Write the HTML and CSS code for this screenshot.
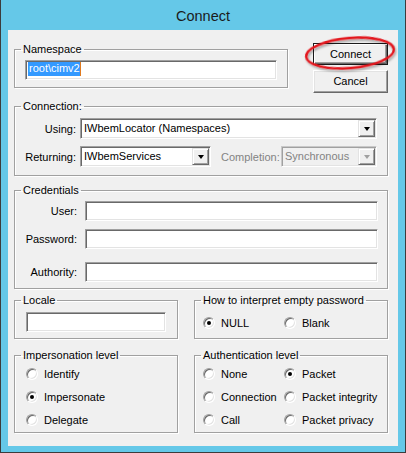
FILE: index.html
```html
<!DOCTYPE html>
<html>
<head>
<meta charset="utf-8">
<link rel="stylesheet" href="styles.css">
</head>
<body>
<div class="window">
  <div class="titlebar">Connect</div>
  <div class="client">
    <div class="row-top">
      <fieldset class="group ns">
        <legend>Namespace</legend>
        <div class="inner ns-inner">
          <div class="textbox ns-box"><span class="sel">root\cimv2</span><span class="caret"></span></div>
        </div>
      </fieldset>
      <div class="buttons">
        <div class="btn default">Connect</div>
        <div class="btn cancel">Cancel</div>
      </div>
    </div>

    <fieldset class="group conn">
      <legend>Connection:</legend>
      <div class="inner conn-inner">
        <div class="frow">
          <span class="lbl lbl-conn">Using:</span>
          <div class="combo combo-using"><span class="ctext">IWbemLocator (Namespaces)</span><span class="arrow"><i></i></span></div>
        </div>
        <div class="frow frow2">
          <span class="lbl lbl-conn">Returning:</span>
          <div class="combo combo-ret"><span class="ctext">IWbemServices</span><span class="arrow"><i></i></span></div>
          <span class="lbl-dis">Completion:</span>
          <div class="combo combo-dis"><span class="ctext">Synchronous</span><span class="arrow"><i></i></span></div>
        </div>
      </div>
    </fieldset>

    <fieldset class="group cred">
      <legend>Credentials</legend>
      <div class="inner cred-inner">
        <div class="frow crow">
          <span class="lbl lbl-cred">User:</span>
          <div class="textbox cred-box"></div>
        </div>
        <div class="frow crow crow2">
          <span class="lbl lbl-cred">Password:</span>
          <div class="textbox cred-box"></div>
        </div>
        <div class="frow crow crow3">
          <span class="lbl lbl-cred">Authority:</span>
          <div class="textbox cred-box"></div>
        </div>
      </div>
    </fieldset>

    <div class="pair pair1">
      <fieldset class="group left">
        <legend>Locale</legend>
        <div class="inner locale-inner">
          <div class="textbox locale-box"></div>
        </div>
      </fieldset>
      <fieldset class="group right">
        <legend>How to interpret empty password</legend>
        <div class="inner pwd-inner">
          <div class="radios two">
            <div class="radio"><span class="circle on"></span><span>NULL</span></div>
            <div class="radio"><span class="circle"></span><span>Blank</span></div>
          </div>
        </div>
      </fieldset>
    </div>

    <div class="pair pair2">
      <fieldset class="group left">
        <legend>Impersonation level</legend>
        <div class="inner imp-inner">
          <div class="radio rrow"><span class="circle"></span><span>Identify</span></div>
          <div class="radio rrow"><span class="circle on"></span><span>Impersonate</span></div>
          <div class="radio rrow"><span class="circle"></span><span>Delegate</span></div>
        </div>
      </fieldset>
      <fieldset class="group right">
        <legend>Authentication level</legend>
        <div class="inner auth-inner">
          <div class="radios two">
            <div class="radio rrow"><span class="circle"></span><span>None</span></div>
            <div class="radio rrow"><span class="circle on"></span><span>Packet</span></div>
            <div class="radio rrow"><span class="circle"></span><span>Connection</span></div>
            <div class="radio rrow"><span class="circle"></span><span>Packet integrity</span></div>
            <div class="radio rrow"><span class="circle"></span><span>Call</span></div>
            <div class="radio rrow"><span class="circle"></span><span>Packet privacy</span></div>
          </div>
        </div>
      </fieldset>
    </div>
  </div>

  <svg class="annot" width="406" height="453" viewBox="0 0 406 453">
    <defs>
      <filter id="sh" x="-20%" y="-50%" width="140%" height="200%">
        <feDropShadow dx="1" dy="2" stdDeviation="1.3" flood-color="#000" flood-opacity="0.35"/>
      </filter>
    </defs>
    <ellipse cx="350" cy="53" rx="44" ry="15" transform="rotate(-5 350 53)" fill="none" stroke="#e3161e" stroke-width="2.4" filter="url(#sh)"/>
  </svg>
</div>
</body>
</html>
```

FILE: styles.css
```css
html, body {
  margin: 0;
  padding: 0;
  background: #ffffff;
}

.window {
  position: relative;
  width: 406px;
  height: 453px;
  box-sizing: border-box;
  background: #65c8e8;
  border: 1px solid #3c3c3c;
  border-top: 0;
  display: flex;
  flex-direction: column;
  font-family: "Liberation Sans", Arial, sans-serif;
  font-size: 11px;
  color: #000;
}

.titlebar {
  height: 30px;
  flex: none;
  text-align: center;
  line-height: 32px;
  font-size: 14.5px;
  color: #1b1b1b;
}

.client {
  width: 390px;
  height: 416px;
  margin-left: 7px;
  box-sizing: border-box;
  background: #f0f0f0;
  padding: 13px 0 0 6px;
}

.group {
  margin: 0;
  padding: 0;
  box-sizing: border-box;
  border: 1px solid #a0a0a0;
  box-shadow: inset 1px 1px 0 #ffffff, 1px 1px 0 #ffffff;
  min-width: 0;
}

.group legend {
  padding: 0 2px;
  margin-left: 6px;
  line-height: 13px;
  height: 13px;
}

.row-top {
  display: flex;
  align-items: flex-start;
  height: 50px;
}

.ns {
  width: 274px;
  height: 45px;
}

.ns-inner {
  padding: 4px 0 0 10px;
}

.textbox {
  box-sizing: border-box;
  height: 20px;
  background: #fff;
  border: 1px solid;
  border-color: #a0a0a0 #ffffff #ffffff #a0a0a0;
  box-shadow: inset 1px 1px 0 #696969, inset -1px -1px 0 #e3e3e3;
}

.ns-box {
  width: 252px;
  padding: 1px 0 0 2px;
  display: flex;
  align-items: flex-start;
  line-height: 13px;
}

.sel {
  background: #3399ff;
  color: #fff;
  padding: 0 0 1px 1px;
}

.caret {
  width: 1px;
  height: 14px;
  background: #e07a1f;
}

.buttons {
  margin-left: 25px;
  display: flex;
  flex-direction: column;
  gap: 5px;
}

.btn {
  width: 75px;
  box-sizing: border-box;
  text-align: center;
  background: #f0f0f0;
  border: 1px solid;
  border-color: #ffffff #696969 #696969 #ffffff;
  box-shadow: inset -1px -1px 0 #a0a0a0, inset 1px 1px 0 #e3e3e3;
}

.btn.default {
  height: 22px;
  line-height: 20px;
  border-color: #1a1a1a;
  box-shadow: inset 1px 1px 0 #ffffff, inset -1px -1px 0 #696969, inset -2px -2px 0 #a0a0a0;
}

.btn.cancel {
  height: 23px;
  line-height: 21px;
}

.conn {
  margin-top: 7px;
  width: 374px;
  height: 76px;
}

.conn-inner {
  padding: 5px 10px 0 0;
}

.frow {
  display: flex;
  align-items: center;
}

.frow2 {
  margin-top: 7px;
}

.lbl {
  text-align: right;
  flex: none;
}

.lbl-conn {
  width: 61px;
  margin-right: 4px;
}

.combo {
  box-sizing: border-box;
  height: 21px;
  background: #fff;
  border: 1px solid;
  border-color: #a0a0a0 #ffffff #ffffff #a0a0a0;
  box-shadow: inset 1px 1px 0 #696969, inset -1px -1px 0 #e3e3e3;
  display: flex;
  align-items: stretch;
}

.ctext {
  flex: 1;
  padding-left: 3px;
  line-height: 19px;
  white-space: nowrap;
  overflow: hidden;
}

.arrow {
  flex: none;
  width: 17px;
  margin: 1px 1px 1px 0;
  box-sizing: border-box;
  background: #f0f0f0;
  border: 1px solid;
  border-color: #e3e3e3 #696969 #696969 #e3e3e3;
  box-shadow: inset 1px 1px 0 #ffffff, inset -1px -1px 0 #a0a0a0;
  display: flex;
  align-items: center;
  justify-content: center;
}

.arrow i {
  width: 0;
  height: 0;
  border-left: 3.5px solid transparent;
  border-right: 3.5px solid transparent;
  border-top: 4px solid #000;
  margin-top: 1px;
}

.combo-using {
  width: 297px;
}

.combo-ret {
  width: 131px;
}

.lbl-dis {
  margin-left: 10px;
  color: #838383;
}

.combo-dis {
  width: 96px;
  margin-left: auto;
  background: #f0f0f0;
  border-color: #c8c8c8 #ffffff #ffffff #c8c8c8;
  box-shadow: inset 1px 1px 0 #a0a0a0, inset -1px -1px 0 #e3e3e3;
}

.combo-dis .ctext {
  color: #838383;
}

.combo-dis .arrow i {
  border-top-color: #a0a0a0;
}

.cred {
  margin-top: 8px;
  width: 374px;
  height: 105px;
}

.cred-inner {
  padding: 4px 0 0 0;
}

.lbl-cred {
  width: 62px;
  margin-right: 8px;
}

.cred-box {
  width: 293px;
}

.crow2 {
  margin-top: 8px;
}

.crow3 {
  margin-top: 13px;
}

.pair {
  display: flex;
  gap: 16px;
}

.pair1 {
  margin-top: 5px;
  height: 45px;
}

.pair2 {
  margin-top: 10px;
  height: 84px;
}

.pair .group {
  height: 100%;
}

.pair .left {
  width: 164px;
}

.pair .right {
  width: 194px;
}

.locale-inner {
  padding: 5px 0 0 11px;
}

.locale-box {
  width: 140px;
}

.pwd-inner {
  padding: 9px 0 0 8px;
}

.radios.two {
  display: grid;
  grid-template-columns: 81px auto;
}

.radio {
  display: flex;
  align-items: center;
  height: 14px;
  white-space: nowrap;
}

.rrow {
  height: 23px;
}

.circle {
  flex: none;
  width: 12px;
  height: 12px;
  box-sizing: border-box;
  border-radius: 50%;
  background: #fff;
  border: 1px solid;
  border-color: #a0a0a0 #ffffff #ffffff #a0a0a0;
  box-shadow: inset 1px 1px 0 #696969, inset -1px -1px 0 #e3e3e3;
  margin-right: 6px;
  display: flex;
  align-items: center;
  justify-content: center;
}

.circle.on::after {
  content: "";
  width: 4px;
  height: 4px;
  border-radius: 50%;
  background: #000;
}

.imp-inner {
  padding: 0 0 0 11px;
}

.auth-inner {
  padding: 0 0 0 8px;
}

.annot {
  position: absolute;
  left: -1px;
  top: 0;
  pointer-events: none;
}
```
